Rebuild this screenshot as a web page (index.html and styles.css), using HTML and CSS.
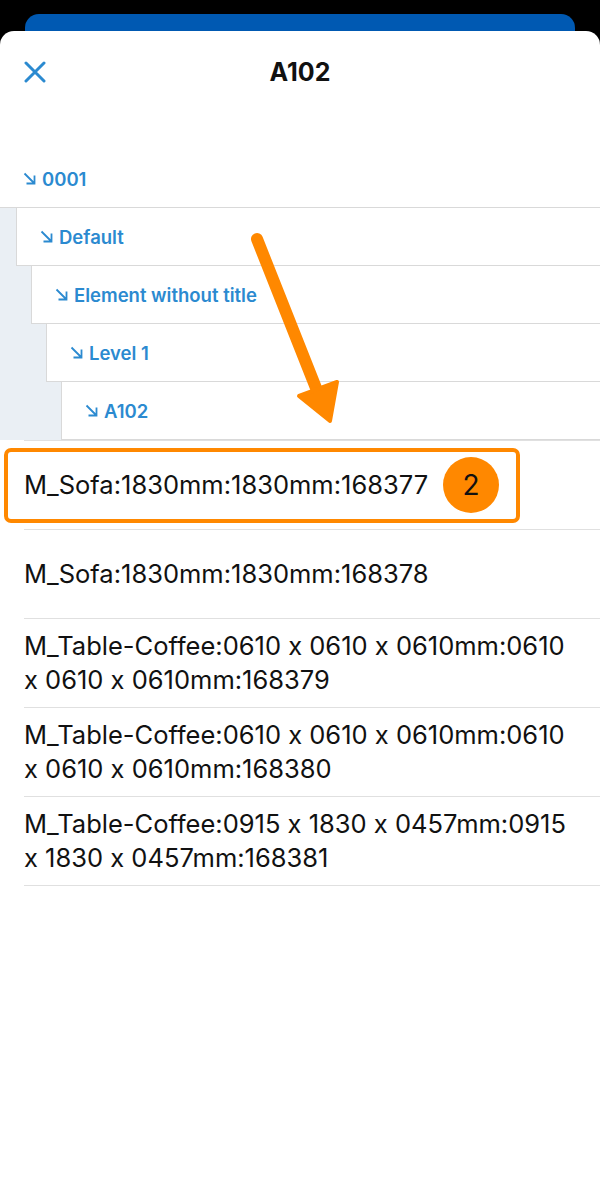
FILE: index.html
```html
<!DOCTYPE html>
<html lang="en">
<head>
    <meta charset="UTF-8">
    <meta name="viewport" content="width=device-width, initial-scale=1.0">
    <title>A102</title>
    <link rel="stylesheet" href="styles.css">
</head>
<body>
    <div class="backdrop-card"></div>

    <div class="sheet">
        <div class="sheet-header">
            <button class="close-btn" aria-label="Close">
                <svg width="22" height="22" viewBox="0 0 22 22">
                    <path d="M2 2 L20 20 M20 2 L2 20" stroke="#2b8ad0" stroke-width="3" stroke-linecap="round" fill="none"/>
                </svg>
            </button>
            <h1 class="title">A102</h1>
            <span></span>
        </div>

        <div class="crumbs">
            <div class="crumb lvl-0"><svg class="crumb-icon" viewBox="0 0 13 13"><path d="M1.5 1.5 L11.5 11.5 M11.5 3.5 V11.5 H3.5" /></svg>0001</div>
            <div class="crumbs-sub">
                <div class="crumb lvl-1"><svg class="crumb-icon" viewBox="0 0 13 13"><path d="M1.5 1.5 L11.5 11.5 M11.5 3.5 V11.5 H3.5" /></svg>Default</div>
                <div class="crumb lvl-2"><svg class="crumb-icon" viewBox="0 0 13 13"><path d="M1.5 1.5 L11.5 11.5 M11.5 3.5 V11.5 H3.5" /></svg>Element without title</div>
                <div class="crumb lvl-3"><svg class="crumb-icon" viewBox="0 0 13 13"><path d="M1.5 1.5 L11.5 11.5 M11.5 3.5 V11.5 H3.5" /></svg>Level 1</div>
                <div class="crumb lvl-4"><svg class="crumb-icon" viewBox="0 0 13 13"><path d="M1.5 1.5 L11.5 11.5 M11.5 3.5 V11.5 H3.5" /></svg>A102</div>
            </div>
        </div>

        <ul class="items">
            <li class="item highlighted">
                M_Sofa:1830mm:1830mm:168377
                <span class="highlight-box"></span>
                <span class="step-badge">2</span>
            </li>
            <li class="item">M_Sofa:1830mm:1830mm:168378</li>
            <li class="item">M_Table-Coffee:0610 x 0610 x 0610mm:0610 x 0610 x 0610mm:168379</li>
            <li class="item">M_Table-Coffee:0610 x 0610 x 0610mm:0610 x 0610 x 0610mm:168380</li>
            <li class="item">M_Table-Coffee:0915 x 1830 x 0457mm:0915 x 1830 x 0457mm:168381</li>
        </ul>
    </div>

    <!-- annotation arrow -->
    <svg class="annotation-arrow" width="600" height="460" viewBox="0 0 600 460">
        <line x1="257" y1="239" x2="316" y2="388" stroke="#ff8800" stroke-width="12" stroke-linecap="round"/>
        <polygon points="299,396 337,382 330,421" fill="#ff8800" stroke="#ff8800" stroke-width="4" stroke-linejoin="round"/>
    </svg>
</body>
</html>
```

FILE: styles.css
```css
body {
    margin: 0;
    background-color: #000;
    font-family: 'Inter', 'Roboto', sans-serif;
    font-feature-settings: "calt" 0;
    position: relative;
    min-height: 1193px;
}

.backdrop-card {
    margin: 14px 25px 0;
    height: 17px;
    background-color: #0059b2;
    border-radius: 14px 14px 0 0;
}

.sheet {
    background-color: #ffffff;
    border-radius: 14px 14px 0 0;
    min-height: 1162px;
}

.sheet-header {
    display: grid;
    grid-template-columns: 1fr auto 1fr;
    align-items: center;
    align-content: start;
    height: 119px;
    padding: 24px 24px 0;
    box-sizing: border-box;
}

.close-btn {
    background: none;
    border: none;
    padding: 0;
    width: 24px;
    height: 34px;
    display: flex;
    align-items: center;
    cursor: pointer;
}

.title {
    margin: 0;
    font-size: 25px;
    line-height: 34px;
    font-weight: 700;
    color: #111;
}

.crumbs-sub {
    background-color: #eaeff4;
}

.crumb {
    height: 58px;
    box-sizing: border-box;
    display: flex;
    align-items: center;
    padding-left: 23px;
    background-color: #ffffff;
    border-bottom: 1px solid #d9d9d9;
    color: #2b8ad0;
    font-size: 18.5px;
    font-weight: 600;
}

.crumb-icon {
    width: 13px;
    height: 13px;
    margin-right: 6px;
    fill: none;
    stroke: #2b8ad0;
    stroke-width: 1.8;
}

.lvl-1,
.lvl-2,
.lvl-3,
.lvl-4 {
    border-left: 1px solid #d9d9d9;
}

.lvl-1 { margin-left: 16px; }
.lvl-2 { margin-left: 31px; }
.lvl-3 { margin-left: 46px; }
.lvl-4 { margin-left: 61px; }

.items {
    list-style: none;
    margin: 0;
    padding: 0 0 0 24px;
}

.item {
    min-height: 68px;
    padding: 10px 30px 10px 0;
    display: flex;
    align-items: center;
    border-top: 1px solid #e0e0e0;
    font-size: 25.5px;
    line-height: 34px;
    color: #111;
}

.item:last-child {
    border-bottom: 1px solid #e0e0e0;
}

.highlighted {
    position: relative;
}

.highlight-box {
    position: absolute;
    left: -20px;
    top: 7px;
    width: 516px;
    height: 75px;
    box-sizing: border-box;
    border: 4px solid #ff8800;
    border-radius: 7px;
}

.step-badge {
    position: absolute;
    left: 419px;
    top: 16px;
    width: 56px;
    height: 56px;
    border-radius: 50%;
    background-color: #ff8800;
    color: #111;
    font-size: 28px;
    display: flex;
    align-items: center;
    justify-content: center;
}

.annotation-arrow {
    position: absolute;
    top: 0;
    left: 0;
}
```
